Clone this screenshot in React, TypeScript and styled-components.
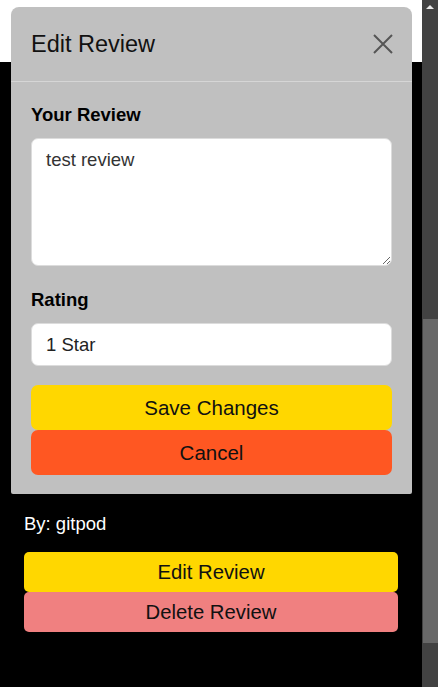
import React from "react";
import styled, { createGlobalStyle } from "styled-components";

const GlobalStyle = createGlobalStyle`
  html, body, #root {
    margin: 0;
    padding: 0;
    height: 100%;
  }
  body {
    font-family: "Liberation Sans", Arial, sans-serif;
    background: #000;
    overflow: hidden;
  }
  * { box-sizing: border-box; }
`;

const Screen = styled.div`
  position: relative;
  display: flex;
  height: 100vh;
  width: 100%;
`;

const Page = styled.div`
  flex: 1;
  display: flex;
  flex-direction: column;
  background: #000;
  min-width: 0;
`;

const TopBar = styled.header`
  height: 62px;
  background: #ffffff;
  flex-shrink: 0;
`;

const Main = styled.main`
  flex: 1;
  display: flex;
  flex-direction: column;
  justify-content: flex-end;
  padding: 0 24px 55px;
`;

const ReviewCard = styled.section`
  display: flex;
  flex-direction: column;
  color: #fff;
`;

const ReviewText = styled.p`
  margin: 0 0 20px;
  font-size: 18.5px;
  line-height: 20px;
`;

const MetaLine = styled.p<{ $gap: number }>`
  margin: 0 0 ${(p) => p.$gap}px;
  font-size: 18.5px;
  line-height: 20px;
  color: #fff;
`;

const ActionButton = styled.button<{ $bg: string }>`
  height: 40px;
  width: 100%;
  border: none;
  border-radius: 5px;
  background: ${(p) => p.$bg};
  color: #111;
  font-family: "Liberation Sans", Arial, sans-serif;
  font-size: 20.3px;
  padding: 0;
  cursor: pointer;
`;

const Scrollbar = styled.div`
  width: 16px;
  flex-shrink: 0;
  background: #424242;
  display: flex;
  flex-direction: column;
`;

const ScrollArrow = styled.div`
  height: 16px;
  display: flex;
  justify-content: center;
  padding-top: 5px;
  &::before {
    content: "";
    width: 0;
    height: 0;
    border-left: 4px solid transparent;
    border-right: 4px solid transparent;
    border-bottom: 4px solid #e8e8e8;
  }
`;

const ScrollTrack = styled.div`
  flex: 1;
  display: flex;
  flex-direction: column;
  padding-left: 1px;
`;

const ScrollThumb = styled.div<{ $top: number; $height: number }>`
  margin-top: ${(p) => p.$top}px;
  height: ${(p) => p.$height}px;
  background: #686868;
`;

const Modal = styled.div`
  position: absolute;
  top: 7px;
  left: 11px;
  width: 401px;
  background: #c0c0c0;
  border-radius: 8px 8px 2px 2px;
  display: flex;
  flex-direction: column;
`;

const ModalHeader = styled.div`
  height: 75px;
  padding: 0 19px 0 20px;
  display: flex;
  align-items: center;
  justify-content: space-between;
  border-bottom: 1px solid #d6d6d6;
`;

const ModalTitle = styled.h2`
  margin: 0;
  font-size: 23.5px;
  font-weight: 400;
  color: #111;
  line-height: 28px;
`;

const CloseButton = styled.button`
  width: 20px;
  height: 20px;
  padding: 0;
  border: none;
  background: transparent;
  display: flex;
  align-items: center;
  justify-content: center;
  cursor: pointer;
`;

const ModalBody = styled.div`
  padding: 22px 20px 19px;
  display: flex;
  flex-direction: column;
`;

const FieldGroup = styled.div<{ $gap: number }>`
  display: flex;
  flex-direction: column;
  margin-bottom: ${(p) => p.$gap}px;
`;

const Label = styled.label`
  font-size: 18.5px;
  font-weight: 700;
  line-height: 21px;
  color: #000;
  margin-bottom: 13px;
`;

const TextArea = styled.textarea`
  width: 100%;
  height: 128px;
  border: 1px solid #dcdcdc;
  border-radius: 7px;
  background: #fff;
  padding: 10px 14px;
  font-family: "Liberation Sans", Arial, sans-serif;
  font-size: 18.5px;
  color: #333;
  resize: vertical;
  outline: none;
`;

const TextInput = styled.input`
  width: 100%;
  height: 43px;
  border: 1px solid #dcdcdc;
  border-radius: 7px;
  background: #fff;
  padding: 0 14px;
  font-family: "Liberation Sans", Arial, sans-serif;
  font-size: 18.5px;
  color: #222;
  outline: none;
`;

const ModalButton = styled.button<{ $bg: string }>`
  height: 45px;
  width: 100%;
  border: none;
  border-radius: 7px;
  background: ${(p) => p.$bg};
  color: #111;
  font-family: "Liberation Sans", Arial, sans-serif;
  font-size: 20.5px;
  padding: 0;
  cursor: pointer;
`;

const ButtonStack = styled.div`
  display: flex;
  flex-direction: column;
`;

export default function App() {
  return (
    <>
      <GlobalStyle />
      <Screen>
        <Page>
          <TopBar />
          <Main>
            <ReviewCard>
              <ReviewText>test review</ReviewText>
              <MetaLine $gap={20}>Rating: 1 Star</MetaLine>
              <MetaLine $gap={18}>By: gitpod</MetaLine>
              <ActionButton $bg="#ffd700">Edit Review</ActionButton>
              <ActionButton $bg="#f08080">Delete Review</ActionButton>
            </ReviewCard>
          </Main>
        </Page>
        <Scrollbar>
          <ScrollArrow />
          <ScrollTrack>
            <ScrollThumb $top={303} $height={324} />
          </ScrollTrack>
        </Scrollbar>
        <Modal role="dialog" aria-label="Edit Review">
          <ModalHeader>
            <ModalTitle>Edit Review</ModalTitle>
            <CloseButton aria-label="Close">
              <svg width="20" height="20" viewBox="0 0 20 20">
                <path
                  d="M1 1 L19 19 M19 1 L1 19"
                  stroke="#555"
                  strokeWidth="2"
                  fill="none"
                />
              </svg>
            </CloseButton>
          </ModalHeader>
          <ModalBody>
            <FieldGroup $gap={23}>
              <Label>Your Review</Label>
              <TextArea defaultValue="test review" />
            </FieldGroup>
            <FieldGroup $gap={19}>
              <Label>Rating</Label>
              <TextInput defaultValue="1 Star" readOnly />
            </FieldGroup>
            <ButtonStack>
              <ModalButton $bg="#ffd700">Save Changes</ModalButton>
              <ModalButton $bg="#ff5722">Cancel</ModalButton>
            </ButtonStack>
          </ModalBody>
        </Modal>
      </Screen>
    </>
  );
}
